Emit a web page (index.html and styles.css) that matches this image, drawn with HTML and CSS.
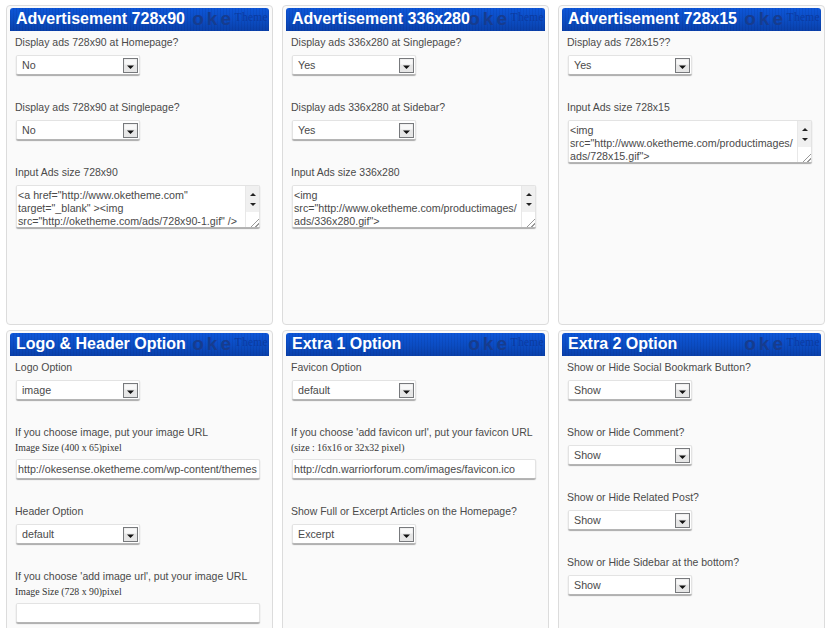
FILE: index.html
```html
<!DOCTYPE html>
<html lang="en">
<head>
<meta charset="utf-8">
<title>Theme options</title>
<link rel="stylesheet" href="styles.css">
</head>
<body>
<svg width="0" height="0" class="defs"><defs>
<symbol id="arrow" viewBox="0 0 15 15"><rect x=".5" y=".5" width="14" height="14" fill="#e6e6e6" stroke="#77797c"/><rect x="1.5" y="1.5" width="12" height="5" fill="#f8f8f8"/><path d="M4 7.5h7L7.5 11z" fill="#111"/></symbol>
</defs></svg>
<main class="grid">
  <section class="panel">
    <h2 class="title"><span>Advertisement 728x90</span><i class="mark">oke</i><b class="mark2">Theme</b></h2>
    <div class="field"><p class="label">Display ads 728x90 at Homepage?</p><div class="select"><span>No</span><svg class="arr"><use href="#arrow"/></svg></div></div>
    <div class="field"><p class="label">Display ads 728x90 at Singlepage?</p><div class="select"><span>No</span><svg class="arr"><use href="#arrow"/></svg></div></div>
    <div class="field"><p class="label">Input Ads size 728x90</p><div class="area"><div class="atext">&lt;a href="http://www.oketheme.com"<br>target="_blank" &gt;&lt;img<br>src="http://oketheme.com/ads/728x90-1.gif" /&gt;</div><div class="sb"><div class="sbtn"><em class="up"></em><em class="dn"></em></div><div class="grip"></div></div></div></div>
  </section>
  <section class="panel">
    <h2 class="title"><span>Advertisement 336x280</span><i class="mark">oke</i><b class="mark2">Theme</b></h2>
    <div class="field"><p class="label">Display ads 336x280 at Singlepage?</p><div class="select"><span>Yes</span><svg class="arr"><use href="#arrow"/></svg></div></div>
    <div class="field"><p class="label">Display ads 336x280 at Sidebar?</p><div class="select"><span>Yes</span><svg class="arr"><use href="#arrow"/></svg></div></div>
    <div class="field"><p class="label">Input Ads size 336x280</p><div class="area"><div class="atext">&lt;img<br>src="http://www.oketheme.com/productimages/<br>ads/336x280.gif"&gt;</div><div class="sb"><div class="sbtn"><em class="up"></em><em class="dn"></em></div><div class="grip"></div></div></div></div>
  </section>
  <section class="panel">
    <h2 class="title"><span>Advertisement 728x15</span><i class="mark">oke</i><b class="mark2">Theme</b></h2>
    <div class="field"><p class="label">Display ads 728x15??</p><div class="select"><span>Yes</span><svg class="arr"><use href="#arrow"/></svg></div></div>
    <div class="field"><p class="label">Input Ads size 728x15</p><div class="area"><div class="atext">&lt;img<br>src="http://www.oketheme.com/productimages/<br>ads/728x15.gif"&gt;</div><div class="sb"><div class="sbtn"><em class="up"></em><em class="dn"></em></div><div class="grip"></div></div></div></div>
  </section>
  <section class="panel">
    <h2 class="title"><span>Logo &amp; Header Option</span><i class="mark">oke</i><b class="mark2">Theme</b></h2>
    <div class="field"><p class="label">Logo Option</p><div class="select"><span>image</span><svg class="arr"><use href="#arrow"/></svg></div></div>
    <div class="field"><p class="label">If you choose image, put your image URL</p><p class="note">Image Size (400 x 65)pixel</p><div class="input">http://okesense.oketheme.com/wp-content/themes</div></div>
    <div class="field"><p class="label">Header Option</p><div class="select"><span>default</span><svg class="arr"><use href="#arrow"/></svg></div></div>
    <div class="field"><p class="label">If you choose 'add image url', put your image URL</p><p class="note">Image Size (728 x 90)pixel</p><div class="input"></div></div>
  </section>
  <section class="panel">
    <h2 class="title"><span>Extra 1 Option</span><i class="mark">oke</i><b class="mark2">Theme</b></h2>
    <div class="field"><p class="label">Favicon Option</p><div class="select"><span>default</span><svg class="arr"><use href="#arrow"/></svg></div></div>
    <div class="field"><p class="label">If you choose 'add favicon url', put your favicon URL</p><p class="note">(size : 16x16 or 32x32 pixel)</p><div class="input">http://cdn.warriorforum.com/images/favicon.ico</div></div>
    <div class="field"><p class="label">Show Full or Excerpt Articles on the Homepage?</p><div class="select"><span>Excerpt</span><svg class="arr"><use href="#arrow"/></svg></div></div>
  </section>
  <section class="panel">
    <h2 class="title"><span>Extra 2 Option</span><i class="mark">oke</i><b class="mark2">Theme</b></h2>
    <div class="field"><p class="label">Show or Hide Social Bookmark Button?</p><div class="select"><span>Show</span><svg class="arr"><use href="#arrow"/></svg></div></div>
    <div class="field"><p class="label">Show or Hide Comment?</p><div class="select"><span>Show</span><svg class="arr"><use href="#arrow"/></svg></div></div>
    <div class="field"><p class="label">Show or Hide Related Post?</p><div class="select"><span>Show</span><svg class="arr"><use href="#arrow"/></svg></div></div>
    <div class="field"><p class="label">Show or Hide Sidebar at the bottom?</p><div class="select"><span>Show</span><svg class="arr"><use href="#arrow"/></svg></div></div>
  </section>
</main>
</body>
</html>
```
FILE: styles.css
```css
* { box-sizing: border-box; }
html, body { margin: 0; height: 628px; overflow: hidden; background: #fff; }
body { font-family: "Liberation Sans", Arial, sans-serif; color: #4a4a4a; font-size: 10.5px; }
.defs { position: absolute; }
.grid {
  display: grid;
  grid-template-columns: 267px 267px 267px;
  grid-template-rows: 320px 320px;
  column-gap: 9px;
  row-gap: 5px;
  padding: 5px 0 0 6px;
}
.panel {
  background: #fafafa;
  border: 1px solid #dcdcdc;
  border-radius: 4px;
  padding: 2px 3px 0;
}
.title {
  position: relative;
  height: 23px;
  margin: 0 0 3px;
  padding: 0 0 0 6px;
  border-radius: 3px 3px 0 0;
  background:
    repeating-linear-gradient(90deg, rgba(0, 0, 40, .07) 0 1px, transparent 1px 3px),
    linear-gradient(#0d56d8, #0b4cc2 55%, #0a40aa);
  color: #fff;
  font-size: 16px;
  line-height: 22px;
  font-weight: bold;
}
.title span { position: relative; z-index: 1; }
.mark {
  position: absolute;
  right: 35px;
  top: 0;
  font: bold 19px/22px "Liberation Sans", sans-serif;
  letter-spacing: 3px;
  color: #163c8f;
}
.mark2 {
  position: absolute;
  right: 1px;
  top: 2px;
  font: 11.5px/14px "Liberation Serif", serif;
  letter-spacing: .3px;
  color: #0b3aa0;
}
.field { padding: 0 9px 24px 5px; }
.label { margin: 0 0 4px; height: 17px; font-size: 10.5px; line-height: 17px; white-space: nowrap; }
.note { margin: -4px 0 4px; height: 14px; font: 9.8px/14px "Liberation Serif", serif; color: #333; white-space: nowrap; }
.select, .input, .area {
  background: #fff;
  border: 1px solid #e3e3e3;
  border-bottom-color: #b5b5b5;
  border-radius: 2px;
  box-shadow: 0 1px 1px #a9a9a9;
  margin-left: 1px;
  font-size: 10.7px;
}
.select {
  display: flex;
  align-items: center;
  justify-content: space-between;
  width: 124px;
  height: 20px;
  padding: 0 1px 0 5px;
}
.arr { width: 15px; height: 15px; }
.input {
  width: 244px;
  height: 20px;
  padding: 0 1px;
  line-height: 19px;
  white-space: nowrap;
  overflow: hidden;
}
.area {
  display: flex;
  width: 244px;
  height: 43px;
  overflow: hidden;
}
.atext { flex: 1; padding: 3px 0 0 1px; line-height: 13px; white-space: nowrap; overflow: hidden; }
.sb { width: 14px; display: flex; flex-direction: column; border-left: 1px solid #e8e8e8; }
.sbtn { flex: 1; background: #f0f0f0; display: flex; flex-direction: column; align-items: center; justify-content: space-around; padding: 3px 0; }
.sbtn em { width: 0; height: 0; border-left: 3px solid transparent; border-right: 3px solid transparent; }
.up { border-bottom: 3px solid #222; }
.dn { border-top: 3px solid #222; }
.grip { height: 15px; background: linear-gradient(135deg, #fff 68%, #999 68%, #999 74%, #fff 74%, #fff 84%, #999 84%, #999 90%, #fff 90%); }
```
